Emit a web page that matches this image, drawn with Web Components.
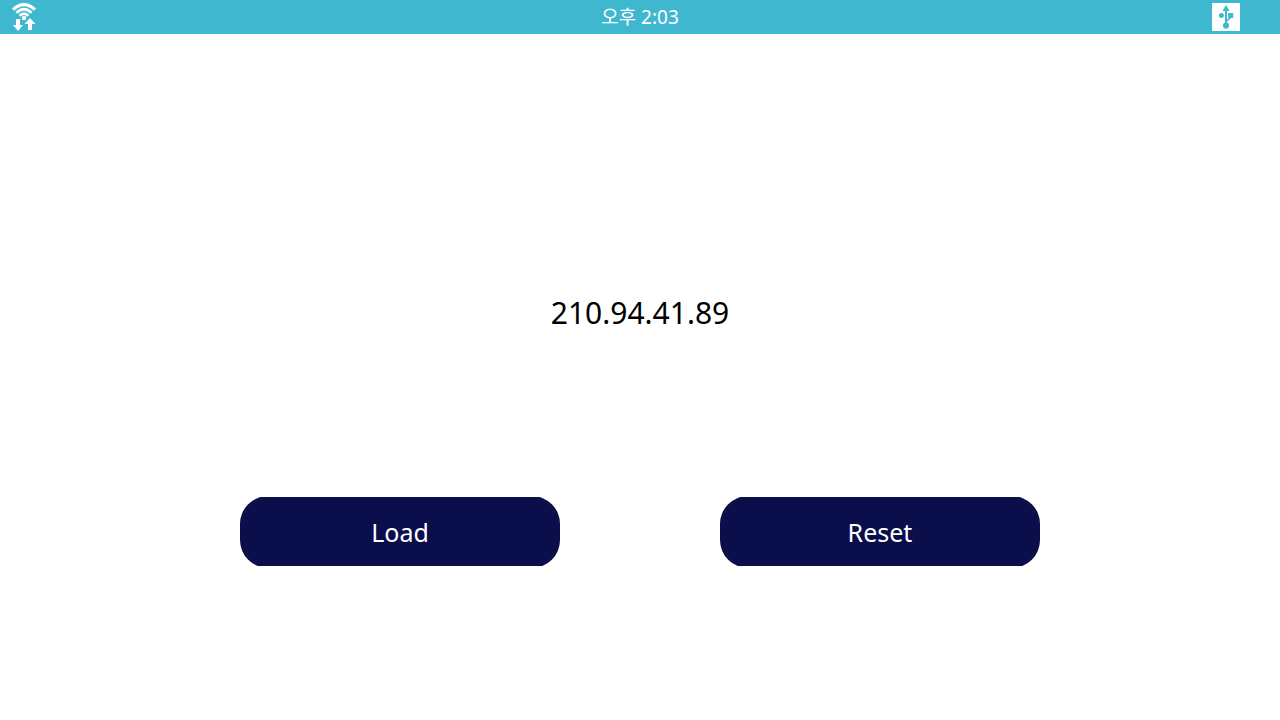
<!DOCTYPE html>
<html lang="ko">
<head>
<meta charset="utf-8">
<meta name="viewport" content="width=device-width, initial-scale=1">
<title>Device</title>
<style>
html, body { height: 100%; margin: 0; }
body { background: #fff; font-family: "Noto Sans", "Noto Sans CJK KR", sans-serif; }
</style>
</head>
<body>
<device-screen>
  <status-bar slot="status">
    <wifi-icon slot="start"></wifi-icon>
    <time>오후 2:03</time>
    <usb-icon slot="end"></usb-icon>
  </status-bar>
  <address-label>210.94.41.89</address-label>
  <pill-button slot="actions">Load</pill-button>
  <pill-button slot="actions">Reset</pill-button>
</device-screen>
<script>
function define(name, markup) {
  const template = document.createElement('template');
  template.innerHTML = markup;
  customElements.define(name, class extends HTMLElement {
    constructor() {
      super();
      this.attachShadow({ mode: 'open' }).append(template.content.cloneNode(true));
    }
  });
}

define('device-screen', `
<style>
:host { display: flex; flex-direction: column; min-height: 100%; }
main { flex: 1; display: grid; grid-template-rows: 1fr auto; padding-bottom: 152px; }
.value { display: grid; place-items: center; padding-top: 96px; }
.actions { display: grid; grid-template-columns: 1fr 1fr; column-gap: 20%; width: 62.5%; margin: 0 auto; }
@supports (height: 100dvh) { :host { min-height: 100dvh; } }
</style>
<slot name="status"></slot>
<main>
  <div class="value"><slot></slot></div>
  <div class="actions"><slot name="actions"></slot></div>
</main>`);

define('status-bar', `
<style>
:host { display: grid; grid-template-columns: 1fr auto 1fr; align-items: center; height: 34px; padding: 0 40px 0 12px; background: #3fb7cf; color: #fff; font-size: 19px; line-height: 34px; box-sizing: border-box; }
.start { display: flex; }
.end { display: flex; justify-content: flex-end; }
.mid { padding-left: 28px; }
</style>
<div class="start"><slot name="start"></slot></div>
<div class="mid"><slot></slot></div>
<div class="end"><slot name="end"></slot></div>`);

define('address-label', `
<style>
:host { display: block; font-size: 30px; line-height: 40px; color: #000; }
</style>
<slot></slot>`);

define('pill-button', `
<style>
:host { display: block; }
button { display: block; width: 100%; height: 72px; border: 0; padding: 0; border-radius: 28px; clip-path: inset(1px 0 2px); background: #0a0e4a; color: #fff; font: inherit; font-size: 25px; cursor: pointer; }
</style>
<button type="button"><slot></slot></button>`);

define('wifi-icon', `
<style>
:host { display: block; width: 24px; height: 28px; }
svg { display: block; }
</style>
<svg width="24" height="28" viewBox="0 0 24 28" aria-hidden="true">
  <g fill="none" stroke="#fff" stroke-width="3">
    <path d="M1 6.6Q12-3.4 23 6.6"/>
    <path d="M4.4 9.8Q12 2.8 19.6 9.8" stroke-width="2.8"/>
    <path d="M7.6 12.8Q12 8.6 16.4 12.8" stroke-width="2.6"/>
  </g>
  <circle cx="12" cy="15" r="2.2" fill="#fff"/>
  <path fill="#fff" d="M4 16h4v6h3l-5 6-5-6h3zM18 15l5.5 6H20v6h-4v-6h-3.5z"/>
</svg>`);

define('usb-icon', `
<style>
:host { display: block; width: 28px; height: 28px; }
svg { display: block; }
</style>
<svg width="28" height="28" viewBox="0 0 28 28" aria-hidden="true">
  <path fill="#fff" d="M0 0h28v28H0z"/>
  <g fill="#3fb7cf">
    <path d="M14 2l3.6 6h-7.2zM13 7h2v14h-2zM16.2 10h5v5h-5z"/>
    <circle cx="9.4" cy="12.5" r="2.5"/>
    <circle cx="14" cy="22.6" r="3.1"/>
  </g>
  <path d="M17.8 14v1.4L14 18.4" fill="none" stroke="#3fb7cf" stroke-width="1.4"/>
</svg>`);
</script>
</body>
</html>
